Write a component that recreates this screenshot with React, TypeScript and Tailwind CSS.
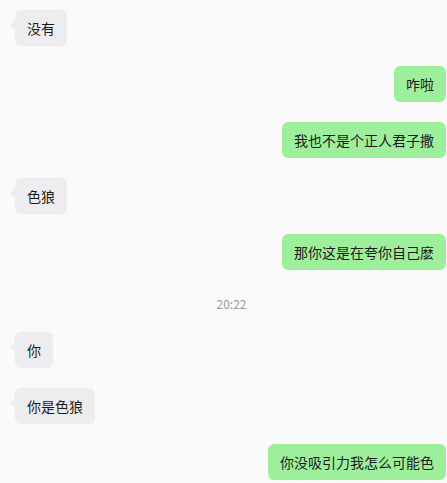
type Msg =
  | { kind: 'in'; text: string }
  | { kind: 'out'; text: string }
  | { kind: 'time'; text: string };

const messages: Msg[] = [
  { kind: 'in', text: '没有' },
  { kind: 'out', text: '咋啦' },
  { kind: 'out', text: '我也不是个正人君子撒' },
  { kind: 'in', text: '色狼' },
  { kind: 'out', text: '那你这是在夸你自己麽' },
  { kind: 'time', text: '20:22' },
  { kind: 'in', text: '你' },
  { kind: 'in', text: '你是色狼' },
  { kind: 'out', text: '你没吸引力我怎么可能色' },
];

function Bubble({ msg }: { msg: Msg }) {
  if (msg.kind === 'time') {
    return (
      <div className="flex justify-center pl-4 pt-[5px] h-[22px]">
        <span className="text-[12px] leading-[17px] text-[#9a9a9a]">{msg.text}</span>
      </div>
    );
  }

  if (msg.kind === 'in') {
    return (
      <div className="flex justify-start pl-[15px]">
        <div className="relative rounded-[6px] bg-[#ededef] px-3 h-[36px] flex items-center text-[14px] text-[#1b1b1b]">
          <span className="absolute left-[-5px] top-[10px] w-0 h-0 border-y-[5px] border-y-transparent border-r-[5px] border-r-[#ededef]" />
          {msg.text}
        </div>
      </div>
    );
  }

  return (
    <div className="flex justify-end pr-[1px]">
      <div className="rounded-[6px] bg-[#9eef9c] px-3 h-[36px] flex items-center text-[14px] text-[#1b1b1b]">
        {msg.text}
      </div>
    </div>
  );
}

export default function App() {
  return (
    <div
      className="w-[447px] h-[483px] overflow-hidden bg-[#fafafa] pt-[10px] flex flex-col gap-[20px]"
      style={{ fontFamily: '"Noto Sans CJK SC", "Noto Sans", sans-serif' }}
    >
      {messages.map((m, i) => (
        <Bubble key={i} msg={m} />
      ))}
    </div>
  );
}
